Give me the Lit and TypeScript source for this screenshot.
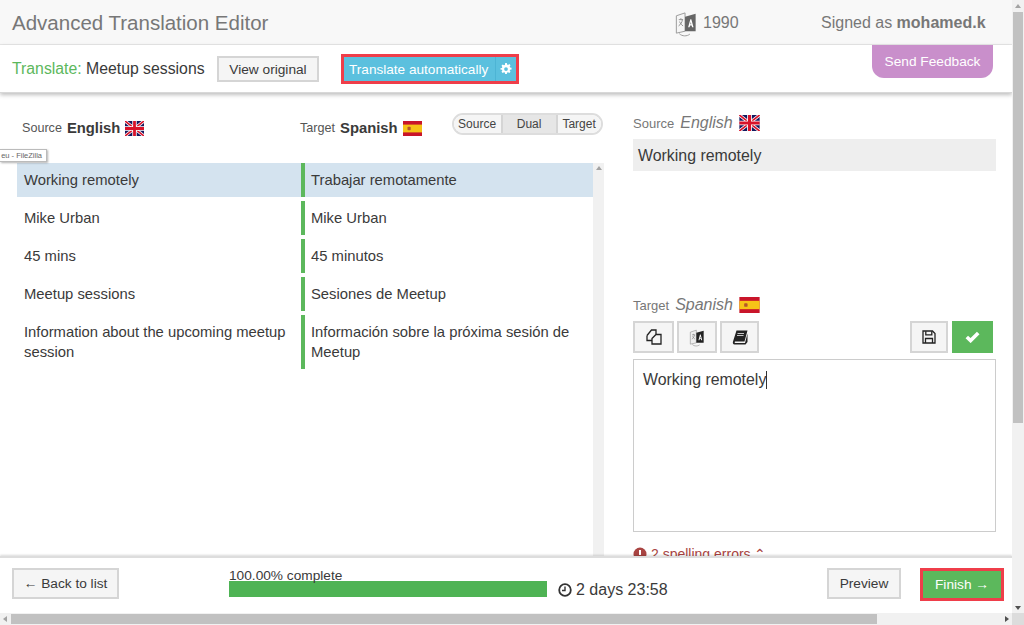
import { LitElement, html, css, svg } from "lit";
import { customElement } from "lit/decorators.js";

const uk = (w = 19, h = 15) => html`<svg class="flag" width=${w} height=${h} viewBox="0 0 19 15"><rect width="19" height="15" fill="#14185e"/><path d="M0 0L19 15M19 0L0 15" stroke="#fff" stroke-width="3"/><path d="M0 0L19 15M19 0L0 15" stroke="#d8132a" stroke-width="1.600"/><path d="M9.5 0V15M0 7.5H19" stroke="#fff" stroke-width="4.400"/><path d="M9.5 0V15M0 7.5H19" stroke="#d8132a" stroke-width="2.800"/></svg>`;
const es = (w = 19, h = 15) => html`<svg class="flag" width=${w} height=${h} viewBox="0 0 19 15"><rect width="19" height="15" fill="#c9152a"/><rect y="3.6" width="19" height="7.8" fill="#f6c317"/><rect x="4.5" y="5.8" width="3.2" height="3.4" rx=".8" fill="#b5562a"/></svg>`;
const translateIcon = (w: number, h: number, dark: boolean) => html`<svg width=${w} height=${h} viewBox="0 0 24 28" fill="none">
  <path d="M2 6L11 3V22L2 24Z" fill=${dark ? "#eee" : "#f6f6f6"} stroke="#999" stroke-width="1"/>
  <path d="M11 7L22 4V22L11 22Z" fill=${dark ? "#222" : "#666"}/>
  <path d="M14.2 18L16.5 9.5H17.5L19.8 18H18.3L17.8 16H16.2L15.7 18ZM16.5 14.8H17.5L17 12.4Z" fill="#fff"/>
  <path d="M4.5 10H9M6.7 8.5V10M8.3 10C7.8 13 6.5 15 4.3 16.5M5.4 12C6 14 7.2 15.5 9 16.5" stroke=${dark ? "#777" : "#888"} stroke-width=".9"/>
  <path d="M5 24.5C8 27.5 13 27.5 16 25" stroke="#999" stroke-width="1"/>
</svg>`;
const gear = svg`<path fill-rule="evenodd" d="M6.9 0h2.2l.4 2 1.2.5 1.7-1.1 1.6 1.6-1.1 1.7.5 1.2 2 .4v2.2l-2 .4-.5 1.2 1.1 1.7-1.6 1.6-1.7-1.1-1.2.5-.4 2H6.900l-.4-2-1.200-.5-1.700 1.100-1.600-1.600 1.100-1.700-.5-1.200-2-.4V6.900l2-.4.5-1.200-1.100-1.700 1.600-1.600 1.700 1.100 1.200-.5zM8 5.500a2.500 2.500 0 1 0 0 5 2.500 2.500 0 0 0 0-5z" fill="#fff"/>`;

@customElement("app-root")
export class AppRoot extends LitElement {
  static styles = css`
    :host { display: grid; grid-template-columns: 1fr 12px; grid-template-rows: 1fr 12px; width: 1024px; height: 625px; overflow: hidden; font-family: "Liberation Sans", Arial, sans-serif; color: #3a3a3a; font-size: 14.8px; background: #fff; }
    * { box-sizing: border-box; }
    .page { position: relative; display: flex; flex-direction: column; min-height: 0; overflow: hidden; }
    .head { height: 45px; flex: none; display: flex; align-items: center; padding: 2px 14px 0 12px; background: #f8f8f8; border-bottom: 1px solid #e7e7e7; color: #777; }
    .title { font-size: 20.5px; flex: 1; }
    .count { display: flex; align-items: center; gap: 5px; font-size: 16px; width: 147px; }
    .signed { font-size: 16px; width: 177px; }
    .signed b { font-weight: 700; }
    .sub { height: 48px; flex: none; display: flex; align-items: center; padding: 0 0 0 12px; background: #fff; box-shadow: 0 2px 4px rgba(0,0,0,.25); border-bottom: 1px solid #d8d8d8; position: relative; z-index: 2; }
    .sub .t { font-size: 15.8px; width: 193px; flex: none; margin-right: 12px; white-space: nowrap; }
    .sub .t span { color: #5cb85c; }
    .btn { display: inline-flex; align-items: center; justify-content: center; background: #f5f5f5; border: 2px solid #d5d5d5; color: #3a3a3a; font-size: 13.7px; font-family: inherit; white-space: nowrap; }
    .view { width: 102px; height: 26px; margin-top: 1px; flex: none; }
    .auto { margin: 1px 0 0 22px; height: 30px; width: 178px; flex: none; border: 3px solid #ef3e4a; background: #5bc0de; color: #fff; display: flex; align-items: stretch; font-size: 13.6px; white-space: nowrap; }
    .auto .a { flex: 1; display: flex; align-items: center; padding-left: 5px; }
    .auto .g { width: 21px; display: flex; align-items: center; justify-content: center; border-left: 1px solid #4db4d4; }
    .feedback { position: absolute; left: 872px; top: 45px; width: 121px; height: 33px; border-radius: 0 0 12px 12px; background: #c98fcb; color: #fff; font-size: 13.7px; display: flex; align-items: center; justify-content: center; z-index: 3; }
    .tip { position: absolute; left: 0; top: 149px; width: 47px; height: 13px; background: #fff; border: 1px solid #bbb; border-left: 0; box-shadow: 1px 1px 2px rgba(0,0,0,.3); font-size: 7.5px; color: #666; line-height: 11px; text-align: right; padding-right: 4px; z-index: 4; white-space: nowrap; }
    .main { flex: 1; min-height: 0; overflow: hidden; display: grid; grid-template-columns: 604px 1fr; }
    .left { padding: 18px 0 0 17px; display: flex; flex-direction: column; min-height: 0; }
    .cols { height: 52px; flex: none; display: grid; grid-template-columns: 283px 1fr; align-items: start; }
    .lab { display: flex; align-items: center; gap: 5px; font-size: 12.6px; color: #555; padding-top: 9px; }
    .lab b { font-size: 14.8px; color: #3a3a3a; }
    .lab.l { padding-left: 5px; }
    .cols .r { display: flex; }
    .seg { display: flex; height: 22px; margin: 2px 0 0 30px; border: 2px solid #ddd; border-radius: 11px; overflow: hidden; font-size: 12px; width: 151px; flex: none; }
    .seg span { display: flex; align-items: center; justify-content: center; background: #f5f5f5; color: #444; }
    .seg .s1 { width: 47px; }
    .seg .s2 { width: 57px; background: #e6e6e6; border-left: 2px solid #d5d5d5; border-right: 2px solid #d5d5d5; }
    .seg .s3 { flex: 1; }
    .listwrap { flex: 1; min-height: 0; display: grid; grid-template-columns: 576px 11px; }
    .rows { display: flex; flex-direction: column; gap: 4px; }
    .row { display: grid; grid-template-columns: 284px 1fr; min-height: 34px; line-height: 20px; }
    .row.on { background: #d4e3ef; }
    .row > div { padding: 7px 7px; }
    .row > .tg { border-left: 4px solid #5cb85c; padding-left: 6px; }
    .vs { background: #f1f1f1; position: relative; }
    .arrow { position: absolute; left: 3px; top: 3px; border: 3px solid transparent; border-top: 0; border-bottom: 4px solid #a3a3a3; width: 0; height: 0; }
    .right { padding: 18px 16px 0 29px; display: flex; flex-direction: column; min-height: 0; }
    .right > * { flex: none; }
    .rlab { display: flex; align-items: center; gap: 6px; height: 22px; font-size: 13px; color: #777; margin-top: 1px; }
    .rlab i { font-size: 16px; }
    .srcbox { margin-top: 5px; height: 32px; background: #eee; padding: 1px 5px 0; display: flex; align-items: center; font-size: 15.9px; }
    .gap { height: 122px; }
    .tools { display: flex; gap: 3px; margin-top: 5px; height: 32px; }
    .tools .btn { height: 32px; width: 41px; }
    .tools .btn.mid { width: 40px; }
    .tools .btn.third { width: 39px; }
    .tools .spacer { flex: 1; }
    .tools .btn.save { width: 38px; margin-right: 1px; }
    .tools .btn.ok { background: #5cb85c; border-color: #5cb85c; margin-right: 3px; }
    .editor { margin-top: 6px; height: 173px; border: 1px solid #ccc; padding: 10px 9px; font-size: 15.9px; line-height: 20px; }
    .caret { display: inline-block; width: 1px; height: 18px; background: #333; vertical-align: -4px; }
    .spell { margin-top: 14px; color: #a94442; font-size: 14px; display: flex; align-items: center; gap: 4px; white-space: nowrap; }
    .foot { height: 57px; flex: none; border-top: 2px solid #ddd; box-shadow: 0 -1px 2px rgba(0,0,0,.15); background: #fff; display: flex; position: relative; z-index: 2; padding: 10px 8px 0 12px; align-items: flex-start; }
    .back { width: 107px; height: 31px; margin-right: 110px; flex: none; }
    .prog { width: 318px; flex: none; font-size: 13.7px; line-height: 13px; margin-top: 1px; white-space: nowrap; }
    .bar { height: 16px; background: #4eb354; margin-top: -1px; }
    .time { display: flex; align-items: center; gap: 4px; font-size: 16px; margin: 13px 0 0 11px; flex: 1; height: 18px; }
    .preview { width: 74px; height: 31px; margin-right: 19px; flex: none; }
    .btn.finish { width: 84px; height: 33px; flex: none; background: #5cb85c; color: #fff; border: 3px solid #ef3e4a; }
    .vbar { background: #f1f1f1; position: relative; }
    .vbar .thumb { position: absolute; left: 1px; right: 1px; top: 12px; height: 411px; background: #c1c1c1; }
    .vbar .up, .vbar .dn { position: absolute; left: 3px; border: 3px solid transparent; width: 0; height: 0; }
    .vbar .up { top: 4px; border-top: 0; border-bottom: 4px solid #a3a3a3; }
    .vbar .dn { bottom: 3px; border-bottom: 0; border-top: 4px solid #505050; }
    .hbar { background: #f1f1f1; position: relative; }
    .hbar .thumb { position: absolute; top: 1px; bottom: 1px; left: 11px; width: 866px; background: #c1c1c1; }
    .hbar .lf, .hbar .rt { position: absolute; top: 3px; border: 3px solid transparent; width: 0; height: 0; }
    .hbar .lf { left: 3px; border-left: 0; border-right: 4px solid #a3a3a3; }
    .hbar .rt { right: 3px; border-right: 0; border-left: 4px solid #505050; }
    .corner { background: #dcdcdc; }
    svg { display: block; }
    .flag { flex: none; }
  `;

  render() {
    const rows = [
      ["Working remotely", "Trabajar remotamente"],
      ["Mike Urban", "Mike Urban"],
      ["45 mins", "45 minutos"],
      ["Meetup sessions", "Sesiones de Meetup"],
      ["Information about the upcoming meetup session", "Información sobre la próxima sesión de Meetup"],
    ];
    return html`
      <div class="page">
        <div class="head">
          <div class="title">Advanced Translation Editor</div>
          <div class="count">${translateIcon(24, 27, false)}<span>1990</span></div>
          <div class="signed">Signed as <b>mohamed.k</b></div>
        </div>
        <div class="sub">
          <div class="t"><span>Translate:</span> Meetup sessions</div>
          <div class="btn view">View original</div>
          <div class="auto"><div class="a">Translate automatically</div><div class="g"><svg width="12" height="12" viewBox="0 0 16 16">${gear}</svg></div></div>
        </div>
        <div class="feedback">Send Feedback</div>
        <div class="tip">eu - FileZilla</div>
        <div class="main">
          <div class="left">
            <div class="cols">
              <div class="lab l">Source <b>English</b> ${uk()}</div>
              <div class="r">
                <div class="lab">Target <b>Spanish</b> ${es()}</div>
                <div class="seg"><span class="s1">Source</span><span class="s2">Dual</span><span class="s3">Target</span></div>
              </div>
            </div>
            <div class="listwrap">
              <div class="rows">
                ${rows.map((r, i) => html`<div class="row ${i === 0 ? "on" : ""}"><div>${r[0]}</div><div class="tg">${r[1]}</div></div>`)}
              </div>
              <div class="vs"><div class="arrow"></div></div>
            </div>
          </div>
          <div class="right">
            <div class="rlab">Source <i>English</i> ${uk(21, 16)}</div>
            <div class="srcbox">Working remotely</div>
            <div class="gap"></div>
            <div class="rlab">Target <i>Spanish</i> ${es(21, 16)}</div>
            <div class="tools">
              <div class="btn"><svg width="16" height="16" viewBox="0 0 16 16" fill="none" stroke="#222" stroke-width="1.300"><path d="M1 6.500L5.500 1H10V5"/><path d="M1 6.500V11.500H6"/><path d="M6 9.500L10 5.500H15V15H6Z"/></svg></div>
              <div class="btn mid">${translateIcon(16, 19, true)}</div>
              <div class="btn third"><svg width="16" height="15" viewBox="0 0 16 15"><path d="M4.500 0.500H15.500L12.500 11.500H3.200C2.500 11.500 2.500 13 3.200 13H13L15.500 3.500V12L13.500 14.500H2.500C1 14.500 0.500 13 1 11.500Z" fill="#222"/><path d="M5.500 3.500H12M5 5.500H11.500" stroke="#eee" stroke-width=".8"/></svg></div>
              <div class="spacer"></div>
              <div class="btn save"><svg width="14" height="14" viewBox="0 0 14 14" fill="none" stroke="#222" stroke-width="1.300"><path d="M1 1H10.500L13 3.500V13H1Z"/><path d="M3.800 1.200V4.800H9.800V1.200M3.500 13V8.500H10.500V13"/></svg></div>
              <div class="btn ok"><svg width="15" height="12" viewBox="0 0 15 12"><path d="M1.800 6L5.600 9.600L13.200 2" fill="none" stroke="#fff" stroke-width="3.600"/></svg></div>
            </div>
            <div class="editor">Working remotely<span class="caret"></span></div>
            <div class="spell"><svg width="14" height="14" viewBox="0 0 14 14"><circle cx="7" cy="7" r="6.500" fill="#a94442"/><rect x="6" y="3" width="2" height="5" fill="#fff"/><rect x="6" y="9" width="2" height="2" fill="#fff"/></svg> 2 spelling errors ⌃</div>
          </div>
        </div>
        <div class="foot">
          <div class="btn back">← Back to list</div>
          <div class="prog">100.00% complete<div class="bar"></div></div>
          <div class="time"><svg width="14" height="14" viewBox="0 0 14 14" fill="none" stroke="#333"><circle cx="7" cy="7" r="5.800" stroke-width="1.800"/><path d="M7 3.500V7.500H4" stroke-width="1.400"/></svg><span>2 days 23:58</span></div>
          <div class="btn preview">Preview</div>
          <div class="btn finish">Finish →</div>
        </div>
      </div>
      <div class="vbar"><div class="up"></div><div class="thumb"></div><div class="dn"></div></div>
      <div class="hbar"><div class="lf"></div><div class="thumb"></div><div class="rt"></div></div>
      <div class="corner"></div>
    `;
  }
}
